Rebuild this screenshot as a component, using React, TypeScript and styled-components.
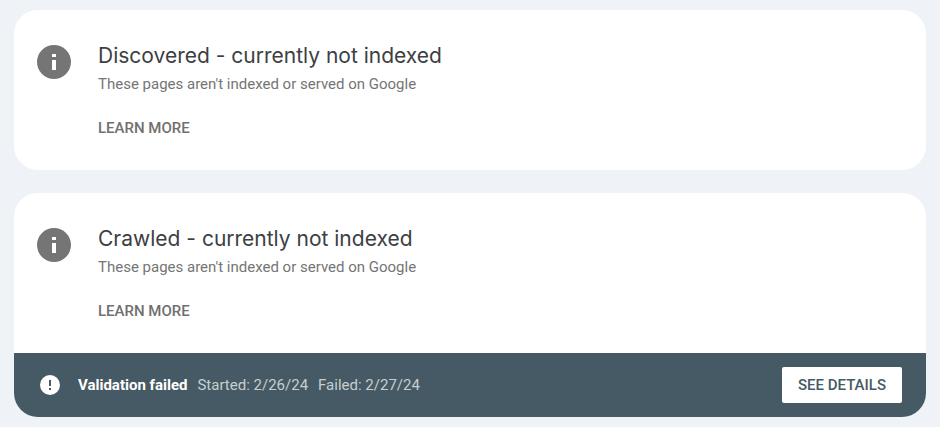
import React from "react";
import styled, { createGlobalStyle } from "styled-components";

const GlobalStyle = createGlobalStyle`
  * { box-sizing: border-box; }
  body { margin: 0; background: #eff3f8; font-family: Roboto, sans-serif; }
`;

const Page = styled.main`
  display: flex;
  flex-direction: column;
  gap: 23px;
  padding: 10px 14px;
`;

const Card = styled.section`
  background: #fff;
  border-radius: 24px;
  overflow: hidden;
`;

const CardBody = styled.div`
  display: flex;
  align-items: flex-start;
  gap: 27px;
  padding: 32px 23px;
`;

const InfoIcon = styled.svg`
  flex: none;
  width: 34px;
  height: 34px;
  margin-top: 3px;
`;

const Content = styled.div`
  display: flex;
  flex-direction: column;
  align-items: flex-start;
`;

const Title = styled.h2`
  margin: 0;
  color: #3c4043;
  font-family: Inter, sans-serif;
  font-size: 21px;
  font-weight: 400;
  line-height: 28px;
`;

const Description = styled.p`
  margin: 4px 0 24px;
  color: #757575;
  font-size: 15px;
  line-height: 20px;
`;

const LearnMore = styled.a`
  color: #707070;
  font-size: 15px;
  font-weight: 500;
  line-height: 20px;
  text-decoration: none;
`;

const StatusBar = styled.footer`
  display: flex;
  align-items: center;
  gap: 10px;
  padding: 14px 24px;
  background: #455a64;
  color: #c7ced1;
  font-size: 15px;
  line-height: 20px;
`;

const AlertIcon = styled.svg`
  width: 24px;
  height: 24px;
  margin-right: 6px;
`;

const StatusName = styled.strong`
  color: #fff;
  font-weight: 700;
`;

const DetailsButton = styled.button`
  margin-left: auto;
  height: 36px;
  padding: 0 16px;
  border: 0;
  border-radius: 2px;
  background: #fff;
  color: #455a64;
  font: 500 15px/20px Roboto, sans-serif;
`;

type IssueProps = { title: string; children?: React.ReactNode };

function Issue({ title, children }: IssueProps) {
  return (
    <Card>
      <CardBody>
        <InfoIcon viewBox="0 0 34 34" aria-hidden="true">
          <circle cx="17" cy="17" r="17" fill="#757575" />
          <path d="M15 9h4v3h-4zM15 15h4v10h-4z" fill="#fff" />
        </InfoIcon>
        <Content>
          <Title>{title}</Title>
          <Description>These pages aren't indexed or served on Google</Description>
          <LearnMore href="#">LEARN MORE</LearnMore>
        </Content>
      </CardBody>
      {children}
    </Card>
  );
}

export default function App() {
  return (
    <>
      <GlobalStyle />
      <Page>
        <Issue title="Discovered - currently not indexed" />
        <Issue title="Crawled - currently not indexed">
          <StatusBar>
            <AlertIcon viewBox="0 0 24 24" aria-hidden="true">
              <path fill="#fff" d="M12 2a10 10 0 1 0 0 20 10 10 0 0 0 0-20zm1 15h-2v-2h2zm0-4h-2V7h2z" />
            </AlertIcon>
            <StatusName>Validation failed</StatusName>
            <span>Started: 2/26/24</span>
            <span>Failed: 2/27/24</span>
            <DetailsButton type="button">SEE DETAILS</DetailsButton>
          </StatusBar>
        </Issue>
      </Page>
    </>
  );
}
